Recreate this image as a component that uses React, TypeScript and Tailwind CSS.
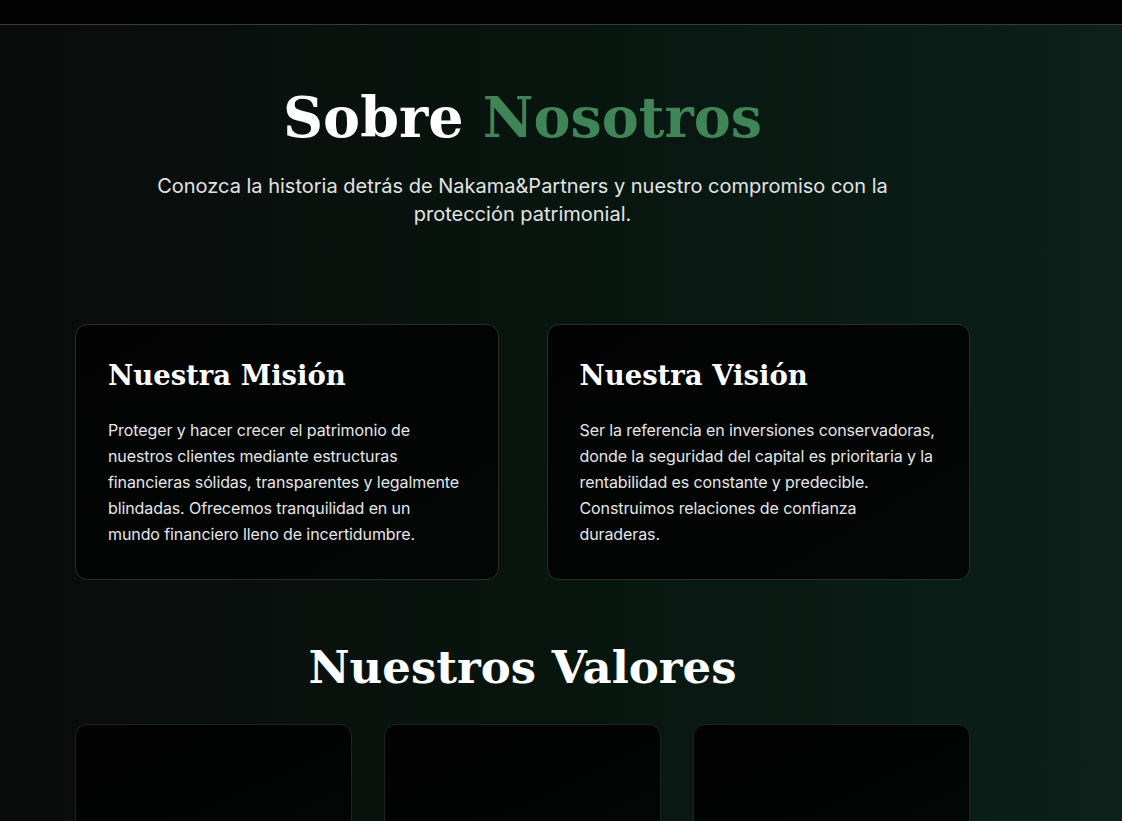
function ValueCard() {
    return (
        <div className="h-[140px] rounded-xl border border-[#1f2422] bg-gradient-to-br from-[#010201] to-[#040706]"></div>
    );
}

function InfoCard({title, text}: {title: string, text: string}) {
    return (
        <div className="rounded-xl border border-[#2a2d2c] bg-gradient-to-br from-[#030303] to-[#020605] p-8">
            <h3 className="mb-6 font-['DejaVu_Serif',serif] text-[27.5px] font-bold leading-9 text-white">{title}</h3>
            <p className="text-base leading-relaxed tracking-[-0.1px] text-[#e6e6e6]">{text}</p>
        </div>
    );
}

export default function App() {
    return (
        <div className="min-h-[821px] overflow-hidden bg-gradient-to-r from-[#0a0b0b] via-[#08150f] to-[#0b211a] font-['Inter',sans-serif]">
            <div className="h-[25px] border-b border-[#3a3a3a] bg-[#030303]"></div>

            <section className="pt-[63px] pl-[75px]">
                <div className="w-[895px]">
                    <div className="text-center">
                        <h1 className="mb-6 h-[60px] font-['DejaVu_Serif',serif] text-[55.5px] font-bold leading-[60px] text-white">
                            Sobre <span className="text-[#3f8558]">Nosotros</span>
                        </h1>
                        <p className="mx-auto max-w-3xl text-xl leading-7 text-[#e2e4e3]">
                            Conozca la historia detrás de Nakama&Partners y nuestro compromiso con la protección patrimonial.
                        </p>
                    </div>

                    <div className="mt-24 grid grid-cols-2 gap-12">
                        <InfoCard
                            title="Nuestra Misión"
                            text="Proteger y hacer crecer el patrimonio de nuestros clientes mediante estructuras financieras sólidas, transparentes y legalmente blindadas. Ofrecemos tranquilidad en un mundo financiero lleno de incertidumbre."
                        />
                        <InfoCard
                            title="Nuestra Visión"
                            text="Ser la referencia en inversiones conservadoras, donde la seguridad del capital es prioritaria y la rentabilidad es constante y predecible. Construimos relaciones de confianza duraderas."
                        />
                    </div>

                    <h2 className="mt-16 mb-8 text-center font-['DejaVu_Serif',serif] text-[45px] font-bold leading-[48px] text-white">
                        Nuestros Valores
                    </h2>

                    <div className="grid grid-cols-3 gap-8">
                        <ValueCard/>
                        <ValueCard/>
                        <ValueCard/>
                    </div>
                </div>
            </section>
        </div>
    );
}
